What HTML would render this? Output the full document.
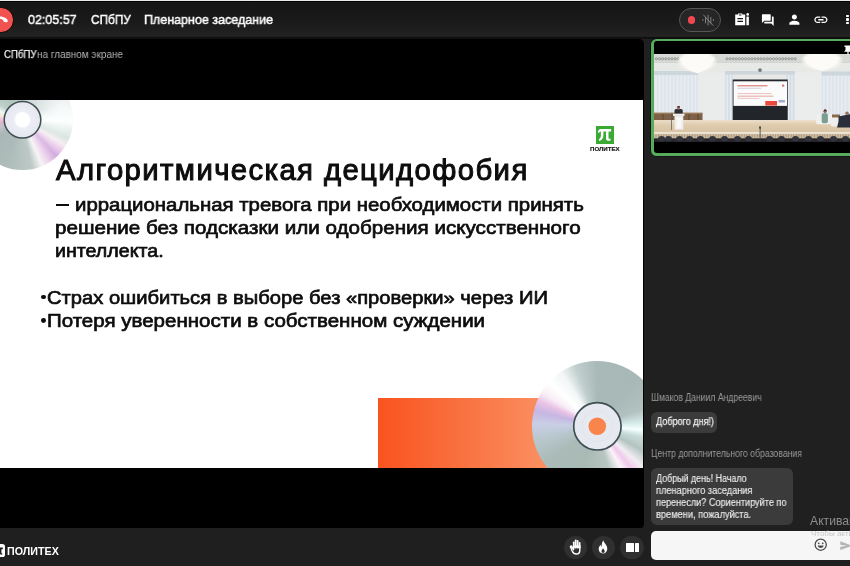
<!DOCTYPE html>
<html lang="ru">
<head>
<meta charset="utf-8">
<title>Пленарное заседание</title>
<style>
*{box-sizing:border-box;margin:0;padding:0}
html,body{width:850px;height:566px;overflow:hidden;background:#202020}
body{position:relative;font-family:"Liberation Sans",sans-serif;color:#fff}
.abs{position:absolute}
.t{position:absolute;white-space:nowrap;line-height:1;transform-origin:0 0;will-change:transform}
/* top bar */
#topstrip{left:0;top:0;width:850px;height:2.4px;background:linear-gradient(#e8e8e8 0,#e8e8e8 0.8px,#000 0.9px)}
#topbar{left:0;top:2px;width:850px;height:37px;background:linear-gradient(#151515 0,#1a1a1a 55%,#222222 90%,#222222 93%,#101010 96%)}
#hang{left:-11.6px;top:7.3px;width:25.4px;height:25.4px;border-radius:50%;background:#f0524f;border:0.6px solid #050505}
/* video stage */
#stage{left:0;top:38.6px;width:644px;height:490px;background:#000;border-radius:0 5px 5px 0;overflow:hidden}
#slide{left:0;top:61.4px;width:642.6px;height:367.6px;background:#fff;overflow:hidden}
.st{color:#0d0d0d;-webkit-text-stroke:0.7px #0d0d0d}
/* bottom bar */
#bottombar{left:0;top:528px;width:850px;height:38px;background:#1f1f1f}
.tb{color:#fff;-webkit-text-stroke:0.45px #fff}
.rb{position:absolute;width:23.8px;height:23.8px;border-radius:50%;background:#303030}
/* sidebar */
#thumb{left:650.8px;top:38.5px;width:210px;height:117.2px;border-radius:5.5px;background:#56ab5c;overflow:hidden;box-shadow:0 0 0 0.6px #0a0a0a}
#thumbin{left:653.5px;top:41.2px;width:210px;height:111.7px;border-radius:3px;background:#000}
.bub{position:absolute;background:#3b3b3b;border-radius:6px}
#input{left:651px;top:531px;width:210px;height:28.6px;background:#f6f6f6;border-radius:5px}
</style>
</head>
<body>
<!-- TOP BAR -->
<div id="topbar" class="abs"></div>
<div id="topstrip" class="abs"></div>
<div id="hang" class="abs"></div>
<div class="t tb" id="tm" style="left:27.5px;top:12.8px;font-size:13px;transform:scaleX(0.9623)">02:05:57</div>
<div class="t tb" id="org" style="left:90.8px;top:12.8px;font-size:13px;transform:scaleX(0.9091)">СПбПУ</div>
<div class="t tb" id="ttl" style="left:144.2px;top:12.8px;font-size:13px;transform:scaleX(0.9615)">Пленарное заседание</div>


<!-- hangup phone icon -->
<svg class="abs" style="left:-8px;top:12.2px" width="18" height="14" viewBox="0 0 18 14"><path d="M0.500 6.800C1.500 4.400 6 3.900 9.400 4.600C12.600 5.300 15.400 6.800 15.800 8.800C16 9.900 15 10.600 13.900 10.300L11.900 9.700C11.300 9.500 11.200 8.800 11.300 8.200C10.300 7.300 8.600 6.700 7 6.500C5 6.300 3.400 6.600 2.600 7.100C2.700 7.800 2.500 8.400 1.900 8.600L0.300 9.100Z" fill="#fff"/></svg>
<!-- rec pill -->
<div class="abs" style="left:678.6px;top:7.9px;width:42.2px;height:24px;border-radius:12px;background:#262626;border:1px solid #565656"></div>
<div class="abs" style="left:687.6px;top:16px;width:7.8px;height:7.8px;border-radius:50%;background:#f0484f"></div>
<svg class="abs" style="left:701px;top:13px" width="14" height="14" viewBox="0 0 14 14" fill="none" stroke="#858585" stroke-width="0.95" stroke-linecap="round"><path d="M7.100 2.200V12M4.500 4.400V9.900M9.800 4.400V9.900M1.900 6.600V7.600M12.400 6.600V7.600"/><path d="M2.600 2L11.800 12.300" stroke="#8f8f8f" stroke-width="0.9"/></svg>
<!-- clipboard icon -->
<svg class="abs" style="left:734px;top:12px" width="17" height="15" viewBox="0 0 17 15"><path d="M1.2 2.4 H4 V1.5 H8.3 V2.4 H11.2 V13.2 H1.2 Z M3.4 5.9 V7.2 H9 V5.9 Z M3.4 8.7 V10 H9 V8.7 Z M4.9 2.4 V3.6 H7.4 V2.4 Z" fill="#fff" fill-rule="evenodd"/><rect x="12.4" y="4.5" width="2.5" height="8.7" rx="0.5" fill="#fff"/><circle cx="13.7" cy="2.4" r="1.3" fill="#fff"/></svg>
<!-- forum icon -->
<svg class="abs" style="left:760px;top:12.5px" width="15.6" height="14.1" viewBox="0 0 24 24"><path d="M21 6h-2v9H6v2c0 .55.45 1 1 1h11l4 4V7c0-.55-.45-1-1-1zm-4 6V3c0-.55-.45-1-1-1H3c-.55 0-1 .45-1 1v14l4-4h10c.55 0 1-.45 1-1z" fill="#fff"/></svg>
<!-- person icon -->
<svg class="abs" style="left:786.3px;top:11.8px" width="16.8" height="15.2" viewBox="0 0 24 24"><path d="M12 12c2.21 0 4-1.79 4-4s-1.79-4-4-4-4 1.79-4 4 1.79 4 4 4zm0 2c-2.670 0-8 1.34-8 4v2h16v-2c0-2.660-5.330-4-8-4z" fill="#fff"/></svg>
<!-- link icon -->
<svg class="abs" style="left:812.9px;top:10.8px" width="15.8" height="17.5" viewBox="0 0 24 24"><path d="M3.9 12c0-1.710 1.390-3.100 3.100-3.100h4V7H7c-2.760 0-5 2.240-5 5s2.240 5 5 5h4v-1.900H7c-1.710 0-3.100-1.390-3.100-3.100zM8 13h8v-2H8v2zm9-6h-4v1.900h4c1.710 0 3.100 1.390 3.100 3.100s-1.390 3.100-3.100 3.100h-4V17h4c2.760 0 5-2.240 5-5s-2.240-5-5-5z" fill="#fff"/></svg>
<!-- more dots -->
<div class="abs" style="left:845.8px;top:14.8px;width:3.1px;height:2.4px;background:#fff;border-radius:0.8px"></div>
<div class="abs" style="left:845.8px;top:18.3px;width:3.1px;height:2.4px;background:#fff;border-radius:0.8px"></div>
<div class="abs" style="left:845.8px;top:21.8px;width:3.1px;height:2.4px;background:#fff;border-radius:0.8px"></div>

<!-- STAGE -->
<div id="stage" class="abs">
  <div class="t" id="om1" style="left:3.6px;top:11.3px;font-size:10.4px;color:#ececec;-webkit-text-stroke:0.25px #ececec;transform:scaleX(0.9257)">СПбПУ</div>
  <div class="t" id="om2" style="left:36.8px;top:11.3px;font-size:10.4px;color:#b4b4b4;transform:scaleX(0.9577)">на главном экране</div>
  <div id="slide" class="abs">

    <!-- orange block -->
    <div class="abs" style="left:378px;top:298px;width:265px;height:70px;background:linear-gradient(90deg,#f9531f 0%,#f9703e 30%,#fa8c5e 60%,#fa9468 100%)"></div>
    <!-- disc top-left: center (22.6,19.4) r 49 (slide coords) -->
    <div class="abs" id="d1" style="left:-28px;top:-30.7px;width:101px;height:101px;border-radius:50%;background:radial-gradient(circle at 88% 38%,rgba(255,255,255,0.8) 0%,rgba(255,255,255,0.45) 22%,rgba(255,255,255,0) 48%),conic-gradient(from 0deg,#b9c7c7 0deg,#b7c6c6 40deg,#c5d3d2 65deg,#e4f2f0 80deg,#fbffff 92deg,#d7e7e3 102deg,#c6d6d0 112deg,#f1e8ef 121deg,#e7c3e6 129deg,#cfa5dc 137deg,#edd0ec 147deg,#f5f5f5 157deg,#bcc9c7 169deg,#adbbb9 200deg,#a9b7b8 235deg,#c5c2cc 252deg,#e2b4d2 262deg,#f1cadb 272deg,#f7ead9 280deg,#eef5f2 290deg,#bfd0ca 303deg,#aec0bb 335deg,#b9c7c7 360deg)"></div>
    <svg class="abs" style="left:0;top:0" width="50" height="45" viewBox="0 0 50 45"><defs><radialGradient id="h1"><stop offset="0" stop-color="#fff"/><stop offset="0.38" stop-color="#fff"/><stop offset="0.46" stop-color="#eceef6"/><stop offset="1" stop-color="#e5e6f0"/></radialGradient></defs><circle cx="22.5" cy="19.8" r="18.3" fill="url(#h1)" stroke="#3e5052" stroke-width="1.5"/></svg>
    <!-- disc bottom-right: center (597.4,326.3) r 65 -->
    <div class="abs" id="d2" style="left:532.4px;top:261.3px;width:130px;height:130px;border-radius:50%;background:conic-gradient(from 0deg,#a9b9b8 0deg,#a7b8b7 40deg,#b2c2c1 70deg,#d7ecea 86deg,#f4ffff 95deg,#c9dcd9 104deg,#b3c3c0 118deg,#f1eef2 132deg,#efc9ea 141deg,#fbf3f9 150deg,#b7c6c1 165deg,#a9b9b4 200deg,#abbbb8 235deg,#b6c6cb 255deg,#c9cfe6 272deg,#c7b6e3 284deg,#e9c2e6 293deg,#f8eef6 301deg,#ffffff 312deg,#f3f7f7 326deg,#c2d0cf 340deg,#a9b9b8 360deg)"></div>
    <svg class="abs" style="left:570px;top:299px" width="56" height="56" viewBox="570 299 56 56"><circle cx="597.4" cy="326.3" r="23.7" fill="#e7e9f0" stroke="#3f5054" stroke-width="1.7"/><circle cx="597.4" cy="326.3" r="15.5" fill="none" stroke="#dfe2ea" stroke-width="0.8"/><circle cx="597.3" cy="326.2" r="8.8" fill="#f9854c"/></svg>
    <!-- logo -->
    <div class="abs" style="left:596px;top:26.5px;width:17.5px;height:17.5px;background:#3aaa35"></div>
    <svg class="abs" style="left:596px;top:26.5px" width="17.5" height="17.5" viewBox="0 0 17.5 17.5"><path d="M1.800 6.500C2.100 4.200 3.200 3.100 5 3.100H15.100V5.500H12.500V11.700C12.500 12.600 13 12.900 14.500 12.700V14.600C11.600 15.200 10 14.400 10 12.200V5.500H7.400V9.200C7.400 12.400 6.100 14.300 3 14.900V12.900C4.500 12.300 4.900 11.200 4.900 9.200V5.500C4 5.500 3.500 5.800 3.300 6.700Z" fill="#fff"/></svg>
    <div class="t" id="lg" style="left:589.9px;top:46.4px;font-size:6px;font-weight:bold;color:#151515;-webkit-text-stroke:0.15px #151515;transform:scaleX(1.02)">ПОЛИТЕХ</div>
    <div class="t st" id="s0" style="left:55.6px;top:55.4px;font-size:29.3px;letter-spacing:1.4px;-webkit-text-stroke-width:1px">Алгоритмическая децидофобия</div>
    <div class="abs" style="left:56.2px;top:104px;width:12.6px;height:2.4px;background:#0d0d0d"></div>
    <div class="t st" id="s1" style="left:75.2px;top:94.8px;font-size:19px;transform:scaleX(1.0734)">иррациональная тревога при необходимости принять</div>
    <div class="t st" id="s2" style="left:55.4px;top:118px;font-size:19px;transform:scaleX(1.0848)">решение без подсказки или одобрения искусственного</div>
    <div class="t st" id="s3" style="left:55.4px;top:140.6px;font-size:19px;transform:scaleX(1.0333)">интеллекта.</div>
    <div class="abs" style="left:41.4px;top:194.6px;width:4.8px;height:4.8px;border-radius:50%;background:#0d0d0d"></div>
    <div class="t st" id="s4" style="left:47px;top:188.2px;font-size:19.2px;transform:scaleX(1.0509)">Страх ошибиться в выборе без «проверки» через ИИ</div>
    <div class="abs" style="left:41.4px;top:218px;width:4.8px;height:4.8px;border-radius:50%;background:#0d0d0d"></div>
    <div class="t st" id="s5" style="left:47px;top:211.2px;font-size:19.2px;transform:scaleX(1.0693)">Потеря уверенности в собственном суждении</div>
  </div>
</div>

<!-- BOTTOM BAR -->
<div id="bottombar" class="abs"></div>
<div class="t" id="brand" style="left:6.6px;top:546.7px;font-size:10.4px;font-weight:bold;transform:scaleX(1.0305)">ПОЛИТЕХ</div>


<!-- brand logo -->
<div class="abs" style="left:-8.2px;top:543.8px;width:13.2px;height:13.2px;border-radius:2.6px;background:#fff"></div>
<svg class="abs" style="left:-6px;top:545.6px" width="10" height="10" viewBox="0 0 10 10"><path d="M0 1.6H8.8V3.2H7.4V6.8C7.4 7.4 7.7 7.6 8.4 7.5V8.6C6.8 8.9 5.9 8.4 5.9 7V3.2H4V5C4 7 3.4 8.2 1.6 8.7V7.5C2.4 7.1 2.6 6.3 2.6 5V3.2H0Z" fill="#1c1c1c"/></svg>
<!-- round buttons -->
<div class="rb" style="left:563.6px;top:535.6px"></div>
<div class="rb" style="left:591.5px;top:535.6px"></div>
<div class="rb" style="left:620.3px;top:535.6px"></div>
<!-- hand -->
<svg class="abs" style="left:568.6px;top:539.4px" width="14" height="16" viewBox="0 0 14 16"><g fill="#fff"><rect x="3.9" y="2.4" width="1.75" height="7" rx="0.85"/><rect x="5.85" y="0.5" width="1.75" height="9" rx="0.85"/><rect x="7.8" y="1.1" width="1.75" height="8.4" rx="0.85"/><rect x="9.75" y="2.9" width="1.75" height="6.6" rx="0.85"/><rect x="3.9" y="6.4" width="7.6" height="2.4"/></g><path d="M4.600 8.400V10.800M4.600 10.600L2.700 7.300C2.200 6.500 1.100 7.100 1.500 8L3.300 12.200C4.100 14 5.500 15 7.400 15C9.800 15 10.800 13.400 10.800 11.200V8.400" fill="none" stroke="#fff" stroke-width="1.400" stroke-linecap="round" stroke-linejoin="round"/></svg>
<!-- fire -->
<svg class="abs" style="left:598px;top:540.4px" width="10" height="14" viewBox="0 0 10 14"><path d="M5.300 0.300C5.700 2.200 7 3.300 8.100 4.900C9 6.200 9.400 7.600 9.300 9C9.100 11.600 7.400 13.500 5 13.500C2.500 13.500 0.700 11.600 0.700 9.100C0.700 7.300 1.500 5.900 2.700 4.800C2.700 5.900 3 6.600 3.600 7C3.500 4.600 4 2.200 5.300 0.300Z M5.100 8C4.900 9.200 3.500 9.800 3.500 11.300C3.500 12.300 4.200 13 5.100 13C6 13 6.700 12.300 6.700 11.300C6.700 10 5.500 9.300 5.100 8Z" fill="#fff" fill-rule="evenodd"/></svg>
<!-- split -->
<div class="abs" style="left:626.3px;top:542.9px;width:8px;height:9.3px;background:#fff;border-radius:0.5px"></div>
<div class="abs" style="left:635.4px;top:542.9px;width:3.3px;height:9.3px;background:#fff;border-radius:0.5px"></div>

<!-- SIDEBAR -->
<div id="thumb" class="abs"></div><div id="thumbin" class="abs"></div>

<!-- HALL START --><svg class="abs" style="left:653.5px;top:53.5px" width="196.5" height="88.2" viewBox="653.5 53.5 196.5 88.2" preserveAspectRatio="none">
<defs>
<radialGradient id="ch" cx="50%" cy="45%" r="55%"><stop offset="0" stop-color="#ffffff"/><stop offset="0.7" stop-color="#f9f8f3"/><stop offset="1" stop-color="#f0efe8" stop-opacity="0"/></radialGradient>
<linearGradient id="fl" x1="0" y1="0" x2="0" y2="1"><stop offset="0" stop-color="#ecdfca"/><stop offset="0.35" stop-color="#dfcbad"/><stop offset="1" stop-color="#d6c1a2"/></linearGradient>
<filter id="bl" x="-5%" y="-5%" width="110%" height="110%"><feGaussianBlur stdDeviation="0.5"/></filter>
</defs>
<g filter="url(#bl)">
<rect x="650" y="50" width="205" height="95" fill="#e7e9e7"/>
<rect x="650" y="53" width="205" height="8.2" fill="#d6d9d5"/>
<g fill="none" stroke="#7b7e7b" stroke-width="0.7"><circle cx="656.0" cy="58.3" r="1.1"/><circle cx="659.1" cy="58.3" r="1.1"/><circle cx="662.2" cy="58.3" r="1.1"/><circle cx="665.3" cy="58.3" r="1.1"/><circle cx="668.4" cy="58.3" r="1.1"/><circle cx="671.5" cy="58.3" r="1.1"/><circle cx="674.6" cy="58.3" r="1.1"/><circle cx="677.7" cy="58.3" r="1.1"/><circle cx="680.8" cy="58.3" r="1.1"/><circle cx="726.5" cy="58.3" r="1.1"/><circle cx="729.6" cy="58.3" r="1.1"/><circle cx="732.7" cy="58.3" r="1.1"/><circle cx="735.8" cy="58.3" r="1.1"/><circle cx="738.9" cy="58.3" r="1.1"/><circle cx="742.0" cy="58.3" r="1.1"/><circle cx="745.1" cy="58.3" r="1.1"/><circle cx="748.2" cy="58.3" r="1.1"/><circle cx="751.3" cy="58.3" r="1.1"/><circle cx="754.4" cy="58.3" r="1.1"/><circle cx="757.5" cy="58.3" r="1.1"/><circle cx="760.6" cy="58.3" r="1.1"/><circle cx="763.7" cy="58.3" r="1.1"/><circle cx="766.8" cy="58.3" r="1.1"/><circle cx="769.9" cy="58.3" r="1.1"/><circle cx="773.0" cy="58.3" r="1.1"/><circle cx="776.1" cy="58.3" r="1.1"/><circle cx="779.2" cy="58.3" r="1.1"/><circle cx="782.3" cy="58.3" r="1.1"/><circle cx="785.4" cy="58.3" r="1.1"/><circle cx="788.5" cy="58.3" r="1.1"/><circle cx="791.6" cy="58.3" r="1.1"/><circle cx="794.7" cy="58.3" r="1.1"/></g>
<rect x="650" y="61.2" width="205" height="1" fill="#c9ccc9"/>
<rect x="697.5" y="72" width="27.5" height="47.6" fill="#eaeceb"/>
<rect x="793.5" y="72" width="28" height="47.6" fill="#eaedec"/>
<rect x="653" y="73" width="44.5" height="39.5" fill="#dfe5ec"/><rect x="654.8" y="73.0" width="1.2" height="39.5" fill="#eaeef3"/><rect x="658.4" y="73.0" width="1.2" height="39.5" fill="#eaeef3"/><rect x="662.0" y="73.0" width="1.2" height="39.5" fill="#eaeef3"/><rect x="665.6" y="73.0" width="1.2" height="39.5" fill="#eaeef3"/><rect x="669.2" y="73.0" width="1.2" height="39.5" fill="#eaeef3"/><rect x="672.8" y="73.0" width="1.2" height="39.5" fill="#eaeef3"/><rect x="676.4" y="73.0" width="1.2" height="39.5" fill="#eaeef3"/><rect x="680.0" y="73.0" width="1.2" height="39.5" fill="#eaeef3"/><rect x="683.6" y="73.0" width="1.2" height="39.5" fill="#eaeef3"/><rect x="687.2" y="73.0" width="1.2" height="39.5" fill="#eaeef3"/><rect x="690.8" y="73.0" width="1.2" height="39.5" fill="#eaeef3"/><rect x="694.4" y="73.0" width="1.2" height="39.5" fill="#eaeef3"/>
<rect x="653" y="70.5" width="44.5" height="4" fill="#cdd5dd"/>
<rect x="724.5" y="73" width="10" height="46.6" fill="#d6dee6"/><rect x="726.1" y="73.0" width="1.2" height="46.6" fill="#eaeef3"/><rect x="729.4" y="73.0" width="1.2" height="46.6" fill="#eaeef3"/><rect x="732.7" y="73.0" width="1.2" height="46.6" fill="#eaeef3"/>
<rect x="786" y="73" width="8" height="46.6" fill="#d4dce4"/><rect x="787.6" y="73.0" width="1.2" height="46.6" fill="#eaeef3"/><rect x="790.9" y="73.0" width="1.2" height="46.6" fill="#eaeef3"/>
<rect x="821" y="74" width="30" height="44.5" fill="#dfe5ec"/><rect x="822.8" y="74.0" width="1.2" height="44.5" fill="#eaeef3"/><rect x="826.4" y="74.0" width="1.2" height="44.5" fill="#eaeef3"/><rect x="830.0" y="74.0" width="1.2" height="44.5" fill="#eaeef3"/><rect x="833.6" y="74.0" width="1.2" height="44.5" fill="#eaeef3"/><rect x="837.2" y="74.0" width="1.2" height="44.5" fill="#eaeef3"/><rect x="840.8" y="74.0" width="1.2" height="44.5" fill="#eaeef3"/><rect x="844.4" y="74.0" width="1.2" height="44.5" fill="#eaeef3"/><rect x="848.0" y="74.0" width="1.2" height="44.5" fill="#eaeef3"/>
<rect x="724.5" y="70.5" width="70" height="3.6" fill="#cfd6db"/>
<rect x="821" y="71" width="30" height="4" fill="#cdd5dd"/>
<circle cx="759.5" cy="69.6" r="1.9" fill="#737a78"/>
<ellipse cx="696.6" cy="61.5" rx="20" ry="11.5" fill="url(#ch)"/>
<path d="M679 57.5 Q696.6 51 714 57.5 Q710 69 696.6 72.8 Q683 69 679 57.5Z" fill="#fcfbf7"/>
<ellipse cx="821.5" cy="60.5" rx="21" ry="11" fill="url(#ch)"/>
<path d="M803.5 57 Q821.5 51 839.5 57 Q835 67 821.5 70.6 Q808 67 803.5 57Z" fill="#fcfbf7"/>
<rect x="732.2" y="79" width="55" height="40.6" fill="#20252c"/>
<rect x="733" y="80.8" width="53.5" height="24.6" fill="#fbfbfb"/>
<rect x="737" y="84.6" width="30" height="1.3" fill="#dc8a84"/>
<rect x="737" y="87.3" width="24" height="0.8" fill="#c4c7ce"/>
<rect x="737" y="92.8" width="34" height="0.8" fill="#e6b3ae"/>
<rect x="737" y="95.2" width="36" height="0.9" fill="#e29d97"/>
<rect x="737" y="97.4" width="22" height="0.8" fill="#e6bcb8"/>
<rect x="764.8" y="100.5" width="11.7" height="4.6" fill="#ea4a3a"/>
<rect x="778" y="99.6" width="6.5" height="2.4" fill="#a4a9cc"/>
<rect x="781.5" y="84" width="2.2" height="2.2" fill="#dd7777"/>
<rect x="653" y="112.3" width="49" height="7.5" fill="#7d6147"/>
<rect x="653" y="112.3" width="49" height="1.3" fill="#9a7a58"/>
<g fill="#5c4531"><rect x="662" y="113.6" width="1" height="6"/><rect x="671" y="113.6" width="1" height="6"/><rect x="688" y="113.6" width="1" height="6"/><rect x="697" y="113.6" width="1" height="6"/></g>
<rect x="650" y="119.6" width="205" height="14" fill="url(#fl)"/>
<rect x="650" y="131.6" width="205" height="1.8" fill="#f0e8da"/>
<rect x="650" y="133.4" width="205" height="5" fill="#cdbca1"/>
<g fill="#a39279"><rect x="655.0" y="134" width="0.9" height="3"/><rect x="657.6" y="134" width="0.9" height="3"/><rect x="660.2" y="134" width="0.9" height="3"/><rect x="662.8" y="134" width="0.9" height="3"/><rect x="665.4" y="134" width="0.9" height="3"/><rect x="668.0" y="134" width="0.9" height="3"/><rect x="670.6" y="134" width="0.9" height="3"/><rect x="673.2" y="134" width="0.9" height="3"/><rect x="675.8" y="134" width="0.9" height="3"/><rect x="678.4" y="134" width="0.9" height="3"/><rect x="681.0" y="134" width="0.9" height="3"/><rect x="683.6" y="134" width="0.9" height="3"/><rect x="686.2" y="134" width="0.9" height="3"/><rect x="688.8" y="134" width="0.9" height="3"/><rect x="691.4" y="134" width="0.9" height="3"/><rect x="694.0" y="134" width="0.9" height="3"/><rect x="696.6" y="134" width="0.9" height="3"/><rect x="699.2" y="134" width="0.9" height="3"/><rect x="701.8" y="134" width="0.9" height="3"/><rect x="704.4" y="134" width="0.9" height="3"/><rect x="707.0" y="134" width="0.9" height="3"/><rect x="709.6" y="134" width="0.9" height="3"/><rect x="712.2" y="134" width="0.9" height="3"/><rect x="714.8" y="134" width="0.9" height="3"/><rect x="717.4" y="134" width="0.9" height="3"/><rect x="720.0" y="134" width="0.9" height="3"/><rect x="722.6" y="134" width="0.9" height="3"/><rect x="725.2" y="134" width="0.9" height="3"/><rect x="727.8" y="134" width="0.9" height="3"/><rect x="730.4" y="134" width="0.9" height="3"/><rect x="733.0" y="134" width="0.9" height="3"/><rect x="735.6" y="134" width="0.9" height="3"/><rect x="738.2" y="134" width="0.9" height="3"/><rect x="740.8" y="134" width="0.9" height="3"/><rect x="743.4" y="134" width="0.9" height="3"/><rect x="746.0" y="134" width="0.9" height="3"/><rect x="748.6" y="134" width="0.9" height="3"/><rect x="751.2" y="134" width="0.9" height="3"/><rect x="753.8" y="134" width="0.9" height="3"/><rect x="756.4" y="134" width="0.9" height="3"/><rect x="759.0" y="134" width="0.9" height="3"/><rect x="761.6" y="134" width="0.9" height="3"/><rect x="764.2" y="134" width="0.9" height="3"/><rect x="766.8" y="134" width="0.9" height="3"/><rect x="769.4" y="134" width="0.9" height="3"/><rect x="772.0" y="134" width="0.9" height="3"/><rect x="774.6" y="134" width="0.9" height="3"/><rect x="777.2" y="134" width="0.9" height="3"/><rect x="779.8" y="134" width="0.9" height="3"/><rect x="782.4" y="134" width="0.9" height="3"/><rect x="785.0" y="134" width="0.9" height="3"/><rect x="787.6" y="134" width="0.9" height="3"/><rect x="790.2" y="134" width="0.9" height="3"/><rect x="792.8" y="134" width="0.9" height="3"/><rect x="795.4" y="134" width="0.9" height="3"/><rect x="798.0" y="134" width="0.9" height="3"/><rect x="800.6" y="134" width="0.9" height="3"/><rect x="803.2" y="134" width="0.9" height="3"/><rect x="805.8" y="134" width="0.9" height="3"/><rect x="808.4" y="134" width="0.9" height="3"/><rect x="811.0" y="134" width="0.9" height="3"/><rect x="813.6" y="134" width="0.9" height="3"/><rect x="816.2" y="134" width="0.9" height="3"/><rect x="818.8" y="134" width="0.9" height="3"/><rect x="821.4" y="134" width="0.9" height="3"/><rect x="824.0" y="134" width="0.9" height="3"/><rect x="826.6" y="134" width="0.9" height="3"/><rect x="829.2" y="134" width="0.9" height="3"/><rect x="831.8" y="134" width="0.9" height="3"/><rect x="834.4" y="134" width="0.9" height="3"/><rect x="837.0" y="134" width="0.9" height="3"/><rect x="839.6" y="134" width="0.9" height="3"/><rect x="842.2" y="134" width="0.9" height="3"/><rect x="844.8" y="134" width="0.9" height="3"/><rect x="847.4" y="134" width="0.9" height="3"/></g>
<rect x="650" y="137.800" width="205" height="5" fill="#26282b"/>
<g fill="#33353a"><ellipse cx="661" cy="138.2" rx="3.4" ry="2.6"/><ellipse cx="668" cy="138.2" rx="3.4" ry="2.6"/><ellipse cx="679" cy="138.2" rx="3.4" ry="2.6"/><ellipse cx="689" cy="138.2" rx="3.4" ry="2.6"/><ellipse cx="700" cy="138.2" rx="3.4" ry="2.6"/><ellipse cx="712" cy="138.2" rx="3.4" ry="2.6"/><ellipse cx="724" cy="138.2" rx="3.4" ry="2.6"/><ellipse cx="737" cy="138.2" rx="3.4" ry="2.6"/><ellipse cx="748" cy="138.2" rx="3.4" ry="2.6"/><ellipse cx="769" cy="138.2" rx="3.4" ry="2.6"/><ellipse cx="781" cy="138.2" rx="3.4" ry="2.6"/><ellipse cx="795" cy="138.2" rx="3.4" ry="2.6"/><ellipse cx="808" cy="138.2" rx="3.4" ry="2.6"/><ellipse cx="820" cy="138.2" rx="3.4" ry="2.6"/><ellipse cx="833" cy="138.2" rx="3.4" ry="2.6"/><ellipse cx="845" cy="138.2" rx="3.4" ry="2.6"/></g>
<rect x="674" y="108.600" width="8.2" height="6.5" rx="1.5" fill="#2e2f36"/>
<circle cx="678" cy="107.4" r="1.7" fill="#a9796a"/>
<rect x="676.8" y="105.5" width="2.6" height="1.4" rx="0.7" fill="#3b2a25"/>
<rect x="672.5" y="113.2" width="11.5" height="2.2" fill="#f4f4f2"/>
<rect x="674" y="115.4" width="8.8" height="13.8" fill="#ecedec"/>
<rect x="676" y="117" width="4.8" height="11" fill="#f9f9f8"/>
<rect x="670.8" y="113" width="0.7" height="16.5" fill="#5a5a5a"/>
<rect x="759.2" y="127" width="0.8" height="13" fill="#3c3c3c"/>
<rect x="758.7" y="125.8" width="1.6" height="2.4" rx="0.6" fill="#2c2c2c"/>
<rect x="815.7" y="113.4" width="16" height="10.4" rx="1.5" fill="#f0f1ee"/>
<rect x="821.2" y="112.8" width="6.2" height="10" rx="1.8" fill="#7d9c92"/>
<circle cx="824.6" cy="110.8" r="1.7" fill="#8a5f50"/>
<rect x="823.4" y="109" width="2.6" height="1.6" rx="0.8" fill="#3a2a24"/>
<rect x="831.5" y="114" width="8" height="3.4" fill="#8a6a4c"/>
<rect x="830.5" y="117" width="13" height="9" rx="1.4" fill="#eeefec"/>
<path d="M838 116 L850 113.500 V127 H836.500 L838 121Z" fill="#2c2f3a"/>
<circle cx="846.5" cy="112.8" r="1.8" fill="#9a6d5e"/>
</g>
</svg><!-- HALL END -->
<!-- pin icon -->
<svg class="abs" style="left:844px;top:45px" width="8" height="10" viewBox="0 0 8 10"><path d="M0.500 0.500H7.500V2H6.500V5L8 6.800H4.600V9.600H3.400V6.800H0V6.800L1.500 5V2H0.500Z" fill="#fff"/></svg>

<div class="t" id="n1" style="left:650.6px;top:392.8px;font-size:10px;color:#999999;transform:scaleX(0.8627)">Шмаков Даниил Андреевич</div>
<div class="bub" style="left:650.8px;top:412px;width:66.6px;height:20.8px"></div>
<div class="t" id="m1" style="left:655.6px;top:417.1px;font-size:10px;color:#f2f2f2;-webkit-text-stroke:0.25px #f2f2f2;transform:scaleX(0.9069)">Доброго дня!)</div>
<div class="t" id="n2" style="left:650.6px;top:448.7px;font-size:10px;color:#999999;transform:scaleX(0.8692)">Центр дополнительного образования</div>
<div class="bub" style="left:650.7px;top:468.2px;width:142.3px;height:56.8px"></div>
<div class="t" id="m2a" style="left:655.8px;top:474.3px;font-size:10px;color:#ececec;-webkit-text-stroke:0.15px #ececec;transform:scaleX(0.8897)">Добрый день! Начало</div>
<div class="t" id="m2b" style="left:655.8px;top:486.1px;font-size:10px;color:#ececec;-webkit-text-stroke:0.15px #ececec;transform:scaleX(0.9206)">пленарного заседания</div>
<div class="t" id="m2c" style="left:655.8px;top:497.9px;font-size:10px;color:#ececec;-webkit-text-stroke:0.15px #ececec;transform:scaleX(0.9122)">перенесли? Сориентируйте по</div>
<div class="t" id="m2d" style="left:655.8px;top:509.7px;font-size:10px;color:#ececec;-webkit-text-stroke:0.15px #ececec;transform:scaleX(0.9253)">времени, пожалуйста.</div>
<div id="input" class="abs"></div>

<!-- emoji + send -->
<svg class="abs" style="left:814px;top:538.4px" width="13.4" height="13.4" viewBox="0 0 13.4 13.4"><circle cx="6.7" cy="6.7" r="5.6" fill="none" stroke="#4a4a4a" stroke-width="1.3"/><circle cx="4.7" cy="5.3" r="0.9" fill="#4a4a4a"/><circle cx="8.7" cy="5.3" r="0.9" fill="#4a4a4a"/><path d="M3.7 7.6C4.2 9.4 5.4 10.1 6.7 10.1C8 10.1 9.2 9.4 9.7 7.6Z" fill="#4a4a4a"/></svg>
<svg class="abs" style="left:839.5px;top:540.6px" width="12" height="9.4" viewBox="0 0 12 9.4"><path d="M0.300 0.300L11.800 4.700L0.300 9.100L0.300 5.700L7 4.700L0.300 3.700Z" fill="#b4b4b4"/></svg>
<!-- windows activation watermark -->
<div class="t" id="wa1" style="left:810.2px;top:515.4px;font-size:12.2px;color:#8d8d8d">Активация Windows</div>
<div class="t" id="wa2" style="left:810.6px;top:529.7px;font-size:8px;color:#c6c6c6">Чтобы активировать Windows</div>
</body>
</html>
